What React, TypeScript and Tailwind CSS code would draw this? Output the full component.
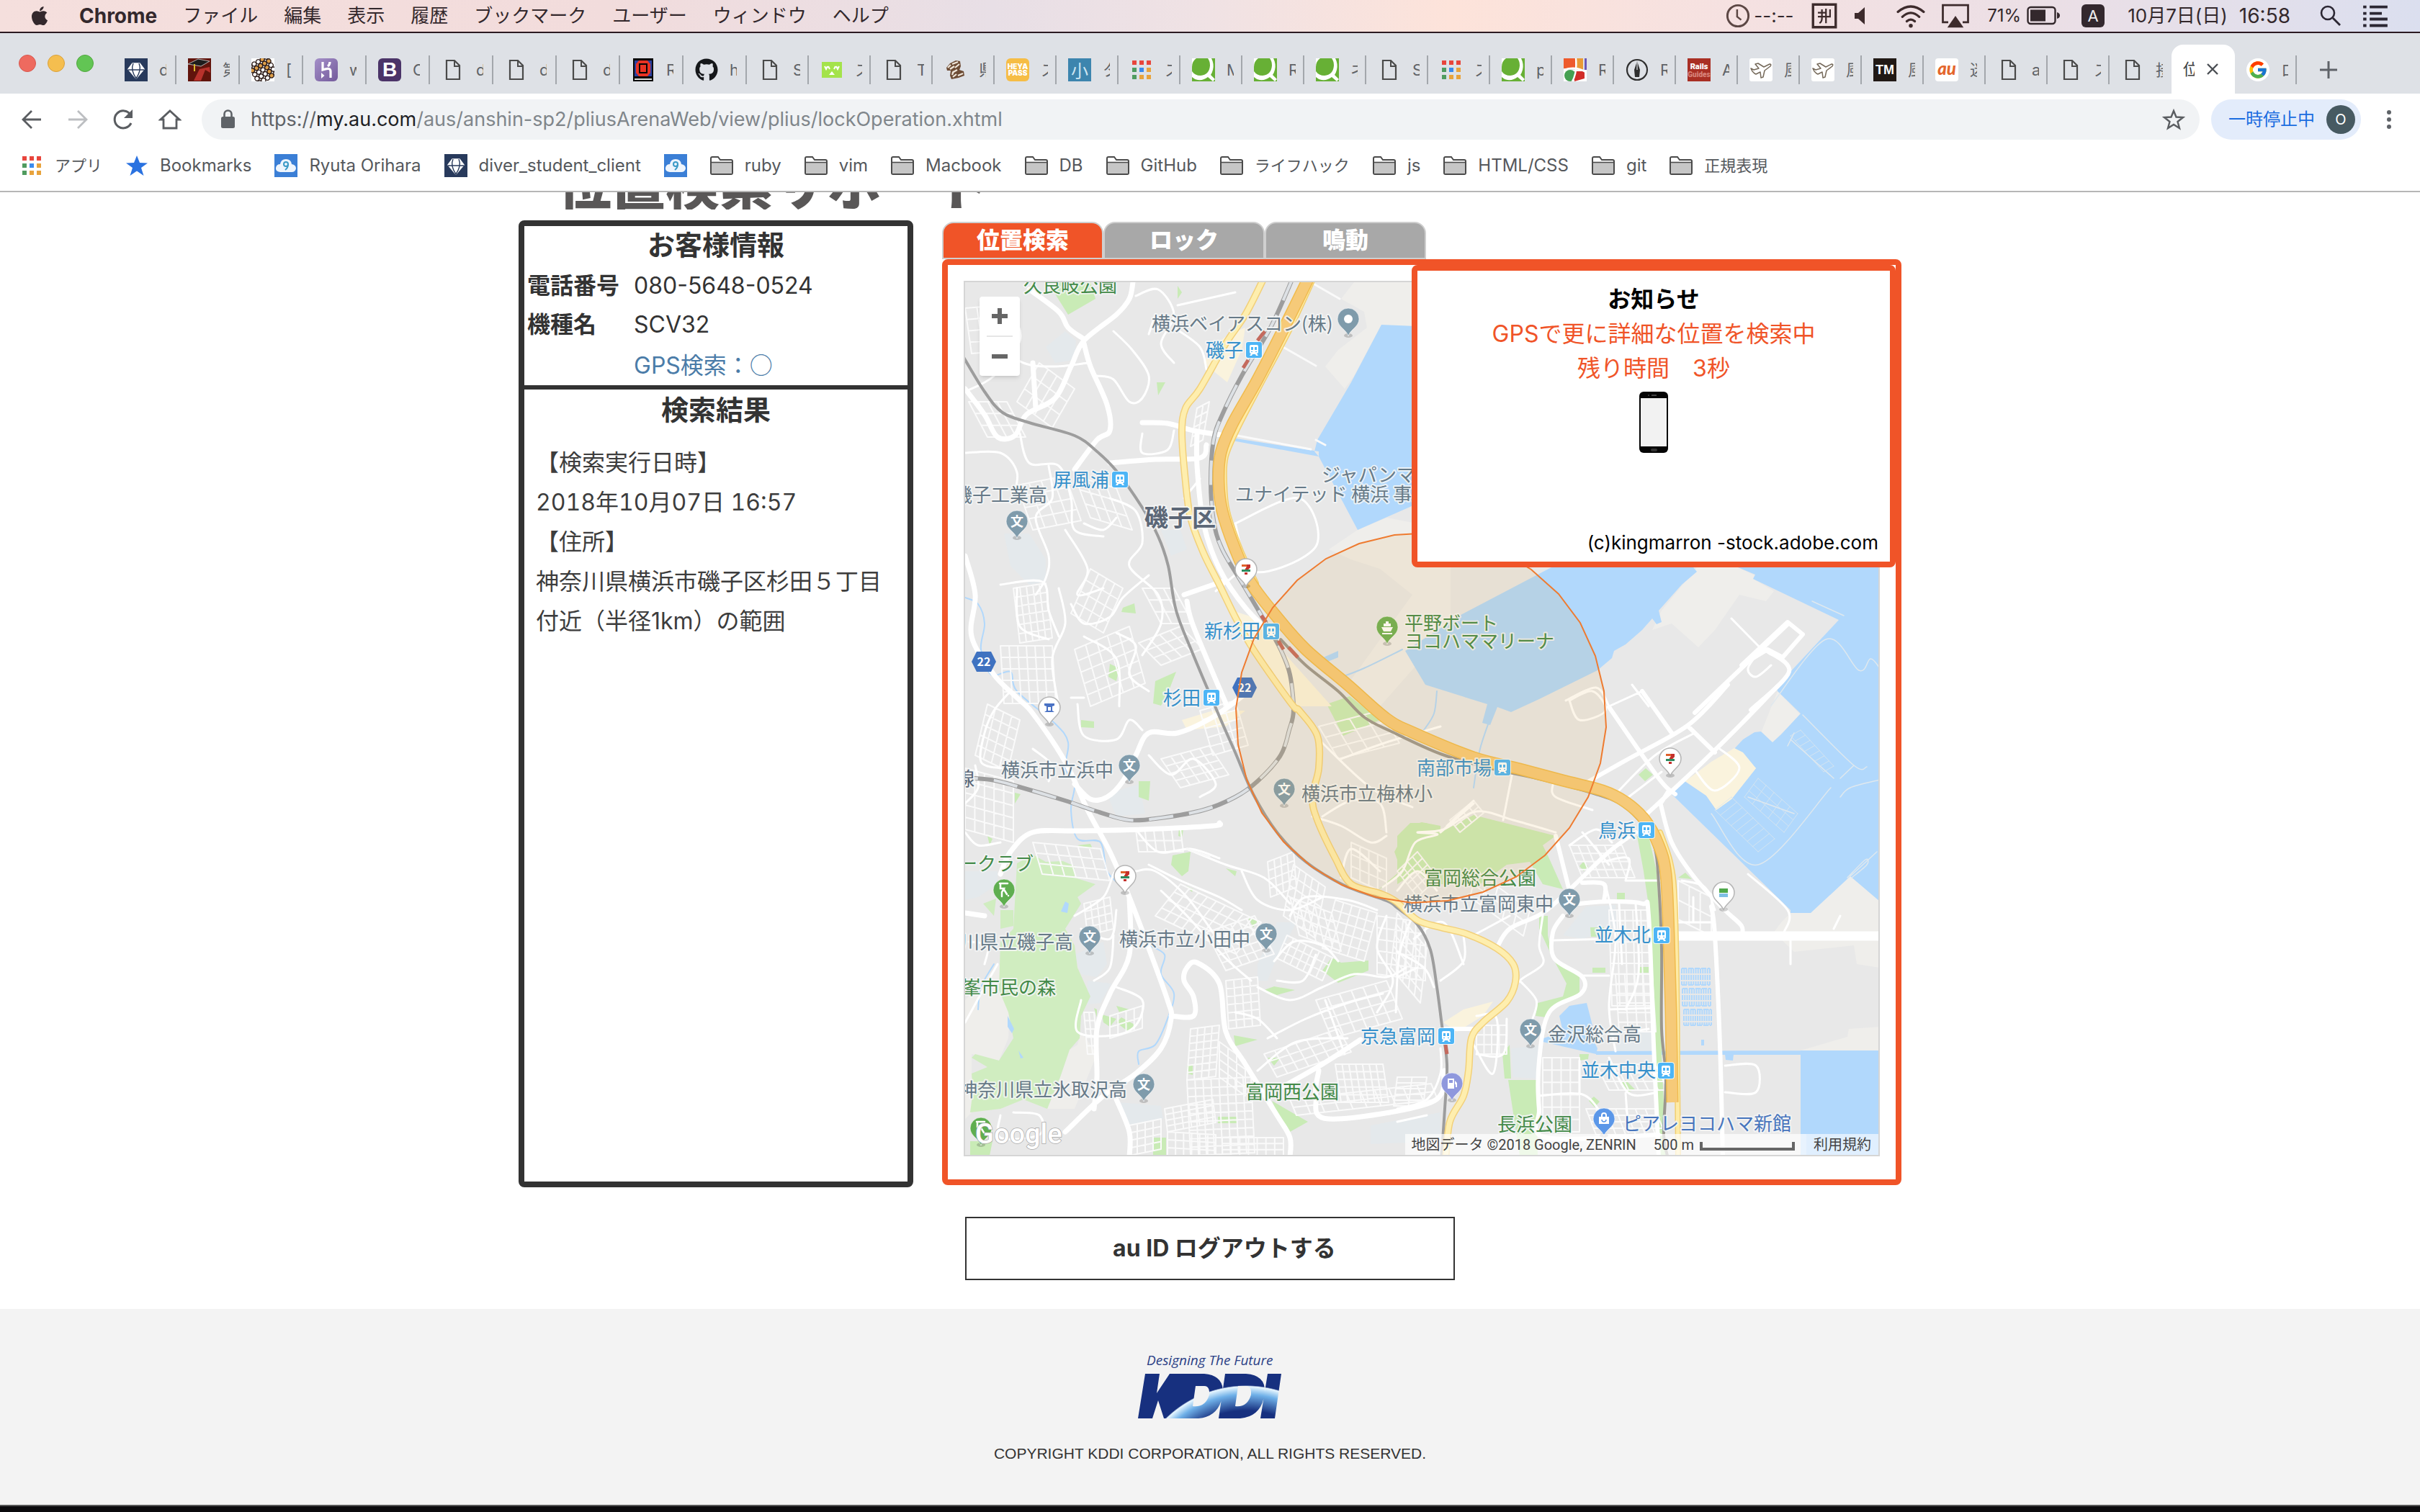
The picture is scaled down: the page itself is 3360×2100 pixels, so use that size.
import React from "react";
import { FaApple, FaGithub } from "react-icons/fa";
import { FcGoogle } from "react-icons/fc";

/* ---------- map geometry ---------- */

// The map is surveyed in four tiles; each has an origin and a scale.
const TILES: Record<string, [number, number, number, number]> = {
  A: [1300, 290, 0.4464, 0.4464],
  B: [1940, 290, 0.4592, 0.4464],
  C: [1300, 960, 0.4464, 0.4464],
  D: [1940, 960, 0.4592, 0.4464],
};

type Pt = [number, number];

function at(tile: string, u: number, v: number): Pt {
  const [x, y, sx, sy] = TILES[tile];
  return [Math.round(x + u * sx), Math.round(y + v * sy)];
}

// "A10,20 30,40 C5,6" -> points; a letter switches the tile.
function pts(s: string): Pt[] {
  let tile = "A";
  return s
    .trim()
    .split(/\s+/)
    .map((tok) => {
      if (/[A-D]/.test(tok[0])) {
        tile = tok[0];
        tok = tok.slice(1);
      }
      const [u, v] = tok.split(",").map(Number);
      return at(tile, u, v);
    });
}

const area = (s: string) =>
  s
    .split(";")
    .map((p) => "M" + pts(p).map((q) => q.join(" ")).join("L") + "Z")
    .join("");

function bend(p: Pt[]): string {
  let d = "M" + p[0].join(" ");
  for (let i = 0; i < p.length - 1; i++) {
    const a = p[i - 1] || p[i];
    const b = p[i];
    const c = p[i + 1];
    const e = p[i + 2] || c;
    d += `C${b[0] + (c[0] - a[0]) / 6} ${b[1] + (c[1] - a[1]) / 6} ${c[0] - (e[0] - b[0]) / 6} ${c[1] - (e[1] - b[1]) / 6} ${c[0]} ${c[1]}`;
  }
  return d;
}

const way = (s: string) =>
  s
    .split(";")
    .map((p) => bend(pts(p)))
    .join("");

// Blocks of side streets: origin, end of first side, end of second side, counts.
function blocks(list: string[]): string {
  return list
    .map((s) => {
      const parts = s.split(" ");
      const [o, a, b] = pts(parts.slice(0, 3).join(" "));
      const n = Number(parts[3]);
      const m = Number(parts[4]);
      let d = "";
      for (let i = 0; i <= n; i++) {
        const x = o[0] + ((a[0] - o[0]) * i) / n;
        const y = o[1] + ((a[1] - o[1]) * i) / n;
        d += `M${x} ${y}l${b[0] - o[0]} ${b[1] - o[1]}`;
      }
      for (let i = 0; i <= m; i++) {
        const x = o[0] + ((b[0] - o[0]) * i) / m;
        const y = o[1] + ((b[1] - o[1]) * i) / m;
        d += `M${x} ${y}l${a[0] - o[0]} ${a[1] - o[1]}`;
      }
      return d;
    })
    .join("");
}

const PALE_LAND = area(
  "A1300,228 1478,228 1478,380 1385,360 1300,520 1270,560 1210,490 1250,440 1340,370 1330,320 1260,280;A1220,1060 1310,1000 1400,960 1600,1000 1600,1300 1380,1548 1280,1480 1480,1200 1380,1120 1290,1090;B905,1116 1030,1116 1080,1140 1075,1152 1140,1190 1115,1220 1035,1200 960,1310 910,1365 830,1290 770,1310 800,1250;D1160,720 1190,690 1250,690 1350,590 1370,575 1458,655 1458,860 1390,850 1380,790 1200,810 1140,750;D1220,1118 1360,1075 1365,1050 1458,1045 1458,1118;C90,960 195,850 230,940 225,1080 195,1150 110,1130 110,1310 90,1330;C440,1100 450,1060 500,1130 430,1300 345,1300 385,1200 415,1115;D1100,130 1150,0 1220,75 1135,160"
);
const SCHOOL_LAND = area(
  "A210,1010 290,1010 340,1090 340,1160 290,1170 230,1110;A340,430 400,380 435,410 430,470 370,480;A700,1000 760,1000 780,1060 730,1080;C530,320 630,290 650,380 560,390;C430,820 520,780 530,850 500,890 450,880;C570,1280 700,1290 705,1330 600,1350;C1000,850 1060,720 1120,720 1050,850 1030,900 1000,900;D570,670 660,665 665,740 560,770 500,760;D345,1110 440,1100 420,1205 350,1200;C90,560 190,560 190,600 130,640 90,650;C1350,1350 1568,1310 1568,1400 1350,1410;D700,1060 780,1060 780,1120 650,1120;C470,900 545,910 510,970 470,975"
);
const WATER = area(
  "A1385,360 1290,540 1185,720 1175,755 1190,770 1310,1000 1478,925 1600,880 1600,370;B465,1116 195,1262 25,1375 85,1480 D273,40 258,98 282,106 302,50 345,66 B430,1525 605,1435 650,1398 655,1375 690,1355 740,1310 770,1275 785,1292 800,1285 790,1250 860,1170 905,1130 895,1116 850,1000;B1030,1000 1470,1000 D1470,655 1458,655 1370,575 1250,690 1190,690 1190,680 830,320 868,280 935,325 965,370 1010,335 1085,240 1020,180 1045,150 1080,128 1100,125 1135,160 1160,135 1220,70 1150,0 B1148,1490 1185,1445 1335,1280 1075,1152 1082,1138 1030,1116;D1220,1118 1470,1118 1470,1460 1220,1460;D490,1010 520,980 572,970 590,1040 585,1070 605,1110 600,1130 440,1090 430,1085 500,1060;D600,1120 1240,1118 1240,1132 600,1132;D990,1130 1018,1130 1015,1150 992,1148;D918,1085 928,1085 928,1102 918,1102;A1195,1400 1250,1375 1250,1395 1200,1415;C400,655 412,660 408,690 388,685;C222,1010 242,1050 235,1065 222,1045;C255,1118 272,1140 262,1142;A818,697 1190,755 1190,770 920,722"
);
const PARK = area(
  "A360,250 380,228 480,228 495,280 410,330;A750,240 765,260 750,280;A685,540 712,540 690,580;A580,1240 615,1228 620,1260 575,1255;A540,1415 570,1430 560,1470 535,1455;A680,1470 745,1440 720,1510 700,1545 675,1540;C630,280 665,280 660,340 630,330;C735,510 790,500 785,560 765,575 730,540;C1200,870 1230,828 1260,845 1345,838 1345,870 1250,908;C1020,930 1050,918 1115,930 1060,945;C515,1005 560,1020 540,1045 520,1030;C560,980 600,990 570,1000;C560,1030 575,1015 620,1040 600,1062;C925,1070 1000,1085 930,1105;C1030,1140 1070,1140 1050,1165;C1045,1275 1155,1340 1100,1372 1060,1310;C675,1390 715,1390 715,1446 675,1446;C875,1325 935,1325 935,1345 875,1345;C1215,40 1285,15 1380,90 1265,140;C450,90 490,95 490,115 450,112;C160,450 175,460 165,480;C245,315 262,320 245,350;C775,605 800,615 795,625;C900,550 935,560 930,575;C970,705 1000,715 985,735;C440,480 480,475 485,490;C755,425 768,430 765,455 752,450;C780,1165 798,1165 798,1195 780,1190;C105,1400 175,1400 165,1446 105,1446;C490,985 500,990 500,1015;D0,450 40,410 90,410 130,440 230,385 480,450 440,480 455,510 500,615 440,600 400,530 330,540 250,600 100,600 60,560 0,600;C1370,620 1450,570 1425,500 1470,420 1510,408 1568,420 1568,500 1490,520;D430,700 455,700 455,760 470,830 550,890 550,940 480,980 450,1015 418,1010 425,970 500,950 512,910 470,830 430,740;D725,450 760,450 785,560 800,820 800,1130 812,1446 785,1446 770,1100 765,700 745,560;D335,1210 420,1210 425,1446 370,1446;D318,1130 340,1100 345,1205 325,1205;D730,260 752,240 772,260 750,280;D550,545 562,532 578,545 564,560;D665,628 688,628 688,648 665,648;D590,860 630,860 630,875 590,875;D728,857 760,857 760,875 728,875;D583,735 625,735 622,765 585,765;D675,1215 690,1210 720,1240 700,1245;D580,1275 595,1262 612,1278 597,1295;D550,1130 580,1130 578,1145 552,1150;D850,580 870,565 890,585"
);
const FOREST = area(
  "C250,535 300,508 340,530 395,528 430,545 430,580 495,600 440,640 450,660 400,740 430,790 440,860 480,950 450,1010 445,1080 415,1115 385,1200 345,1300 270,1270 200,1300 105,1310 115,1240 110,1190 160,1170 110,1140 120,1128 195,1150 240,1080 225,1000 195,930 200,780 240,740;C200,680 240,680 240,730 200,740;C145,660 185,645 180,700"
);
const CREAM = area(
  "D870,280 950,220 1020,178 1045,190 1085,240 1010,335 965,370 935,325;A910,390 960,370 950,440 905,540 870,510 830,480 860,430;C765,90 860,60 960,60 900,110 780,120;A920,1250 1010,1280 1080,1380 1230,1548 1100,1548 960,1330;D140,1030 200,990 290,965 260,1010 180,1060"
);

const HIGHWAY = way(
  "A1155,220 1080,375 1000,530 920,670 885,760 878,850 890,940 930,1060 980,1165 1060,1270 1150,1370 1280,1480 C1400,85 D50,130 230,207 370,243 500,278 620,310 690,345 750,400 790,480 812,570 822,760 828,1000 832,1280"
);
const HIGHWAY_EDGE = way(
  "D795,440 825,530 838,640 845,900 848,1200 850,1460;A1172,220 1100,375 1018,530 938,680 900,770 895,850 905,940 945,1060 995,1165"
);
const COAST_ROAD = way(
  "A1015,225 960,330 900,420 820,560 775,620 765,700 775,850 790,960 830,1070 880,1170 930,1270 980,1360 1040,1450 1110,1548 C1130,60 1185,140 1190,240 1170,330 1185,400 1240,520 1290,600 1380,630 1430,655 D60,712 130,735 210,755 300,800 350,850 358,905 330,965 260,1030 225,1080 215,1180 200,1260 160,1340 145,1460"
);
const PRIVATE_RAIL = way(
  "A80,455 150,570 205,635 290,665 430,705 500,755 560,815 640,930 690,1020 722,1110 745,1250 800,1390 880,1580 C930,190 985,320 1060,440 1150,530 1270,605 1400,652 D0,675 60,725 100,805 120,920 135,1040 150,1160 143,1300 132,1460"
);
const SEASIDE_LINE = way(
  "A1070,1340 1150,1420 1250,1500 C1330,80 1420,128 D130,195 280,240 440,275 600,320 680,355 745,420 780,490 790,600 800,800 800,1050 812,1200 805,1380 820,1460"
);
const JR_LINE = way(
  "A1108,215 1040,370 950,520 890,640 863,720 853,850 862,970 890,1060 960,1180 1020,1280 1070,1370 1100,1450 1110,1560 C1098,120 1070,200 1000,280 930,330 830,370 700,395 600,400 500,375 400,340 250,295 170,275 80,268"
);
const PLATFORMS = way("A1022,380 1000,410;A970,470 955,495;A1010,1265 1025,1285;A1065,1345 1080,1370;A1095,1365 1125,1395;D145,1100 150,1130");

const MAJOR = way(
  "A90,560 150,640 190,710 245,705 280,640 370,590 420,490 460,410 560,330 600,280 612,228;A640,665 720,668 800,690 900,705;A540,790 680,780 820,775 840,735;A430,810 500,720 540,690 530,610 480,490 460,420;A290,250 380,320 410,370 460,405;A300,480 310,620;A812,700 810,800 830,980 880,1120 960,1240 1060,1340;A770,1200 900,1155;A780,1220 800,1300 900,1540;A90,1080 120,1200 110,1330 180,1450 250,1520 C300,70 400,220 470,370 540,500 600,640 660,800 720,960 730,1020 700,1110 620,1190 520,1260 400,1370;C90,690 150,700;C200,570 230,500 300,440 440,435 640,430 860,420 880,410;C430,290 480,335 530,330 580,280 620,200 660,130 750,130 860,80 960,10;C600,640 600,820 540,940 500,1050 500,1200 490,1300;C730,1010 800,1010 800,950 770,900 780,860 810,845 880,910 900,1060 960,1160 1060,1320 1100,1390 1100,1450;C1080,1230 1200,1160 1320,1085;C1190,1180 1180,1260 1220,1330 1540,1280 1580,1180;C560,1270 600,1370 600,1450"
);
const MAJOR_EAST = way(
  "D755,380 900,245 1040,100 1150,-15;D565,290 700,210 880,105 1000,-20;D795,345 830,470 900,580 990,680 1040,730 1042,765;D800,345 820,310;D950,670 960,760 975,1100 985,1450;D300,800 340,740 440,690 530,610 640,500 720,440;D550,660 640,655 740,660 760,700 775,1100 790,1450;D500,700 470,750 475,830 560,890 555,940 460,1000 430,1150 430,1300 450,1390 790,1380;D560,595 625,600 625,655;D140,1050 230,1050;D640,50 790,270 840,320;D740,0 830,130;D880,110 960,190;D480,450 520,620"
);
const PIER_ROAD = area("B1040,1420 1180,1285 1225,1325 1165,1395 1120,1372") + way("B1182,1290 900,1568;B1120,1375 1185,1440 1070,1560");
const HARBOUR_ROAD = way("D845,762 1100,762 1300,762 1470,762");

const MINOR = way(
  "A90,570 180,520 260,410 230,330 150,300;A210,300 200,420 270,480 370,490 470,480;A620,270 690,250 740,330 700,420 740,480;A550,380 610,440 660,520 640,590 600,600 550,530 500,520;A680,330 660,390;A260,700 290,790 380,800 420,900 430,1000 520,1020;A90,760 200,760 250,820 240,900;A350,800 360,900 310,960 350,1080 340,1150 310,1200;A200,1170 330,1160 350,1250 380,1330;A540,900 620,940 640,1040 600,1110 690,1200 700,1290 640,1390;A400,1000 470,1120 440,1200 520,1180;A420,1230 460,1290 540,1270 580,1210 660,1140;A380,1180 400,1290 360,1400 380,1548;A250,1180 260,1300 350,1340;A560,960 520,1000 460,980;A640,700 640,760 720,750 740,690;A560,1320 620,1360 600,1450 660,1500;A820,840 770,900;A940,1130 870,1190;A460,1330 560,1400 570,1548;A740,370 820,430 840,500;A750,300 930,260;A930,980 1130,900 1180,1050 990,1130 930,980;C230,0 180,60 150,130 140,220 200,240;C90,350 130,300 120,230;C300,180 360,230 350,280;C90,440 130,480 200,470;C440,40 460,140 560,150 600,90 640,120;C420,20 460,20;C660,200 730,260 800,210 870,290 820,330;C620,430 690,500 790,490 880,520;C780,490 900,540 1020,580 1100,660;C660,540 760,590 880,640 950,680;C700,620 780,700 900,830 980,900;C620,560 680,560 780,640 880,780;C950,560 1000,650 1100,680 1200,640;C1100,700 1150,640 1280,650 1370,680;C430,700 520,640 560,560 600,640;C450,740 540,770 560,680;C550,760 540,860 490,900;C450,960 440,1060 550,1070 620,1040 640,960 560,920;C1050,840 1110,780 1200,790 1250,840;C1060,900 1140,900 1180,820;C1000,920 1100,960 1200,920 1300,880 1400,890 1460,860;C1400,700 1370,800 1420,900 1370,1000;C1480,700 1440,820 1430,1000;C1030,1080 1150,1020 1280,970 1390,940;C1000,1180 1120,1090 1280,1080;C1210,960 1270,1130;C930,1000 1000,1020 1060,1080;C240,1310 320,1320 320,1380 200,1390 200,1320;C90,1030 140,940 190,850;C150,850 160,790 100,780;C1170,390 1260,420 1350,470 1400,450;C1190,150 1350,300 1480,360;C1260,210 1400,160 1568,110;C1200,390 1290,340 1380,350 1400,440;C1260,580 1290,490 1380,560;C1390,610 1450,560 1490,470 1560,445 D60,440 140,430 240,375 350,400 480,440;D350,240 320,400;D470,290 480,330 590,370;D520,30 590,0 630,60 550,90 520,30;D900,245 960,310 1035,240 970,175;D230,340 150,420;D130,440 230,350;D0,620 60,560 120,620;D50,770 140,720 200,850;D200,760 200,840 130,900;D230,760 340,700;D440,700 430,790 440,850 370,900 330,960;D370,900 420,960 410,1020;D230,1100 290,1190 300,1020 240,1010;D330,1020 320,1130 240,1130;D630,600 660,770 640,980 660,1120;D690,590 820,590;D470,775 640,770;D560,885 640,885;D640,990 770,985;D670,660 680,850;D720,660 730,880 690,990;D860,590 930,610 960,680;D850,720 950,720;D895,640 895,720;D990,1165 1085,1165 1085,1248 990,1248;D430,1260 560,1255 620,1320;D550,1150 550,1250;D640,1140 700,1250 780,1250;D690,1250 700,1370;D700,1060 760,1050;D0,810 80,860 110,920;D0,890 60,860;D0,1300 90,1270 130,1190 130,1110;D0,1340 90,1320;D520,480 600,430 650,470;D620,530 700,520 690,590;D560,440 640,540;B1010,1275 1110,1380;B1100,1370 1060,1430 1085,1455 1130,1420;B710,1480 760,1548;B510,1530 600,1490 640,1548;B640,1548 740,1500;D700,330 800,250;D660,320 780,200 900,130;D1060,570 1180,680 1170,750;D1190,770 1190,850;D1340,700 1320,740"
);
const LANES = blocks([
  "A90,310 200,300 110,450 3 4",
  "A320,480 430,560 250,600 4 3",
  "A100,600 220,600 160,710 4 3",
  "A240,1180 340,1165 260,1350 5 6",
  "A200,1360 360,1360 210,1540 6 5",
  "A430,1370 600,1300 480,1548 5 5",
  "A480,1120 580,1180 420,1260 4 4",
  "A630,1350 760,1300 700,1420 4 3",
  "A810,620 850,600 790,740 2 4",
  "A250,860 400,830 300,1000 4 4",
  "A430,830 560,870 480,960 4 3",
  "A640,1180 740,1180 700,1290 3 3",
  "C90,240 240,280 90,430 5 5",
  "C300,470 510,490 330,570 6 3",
  "C620,430 760,430 630,500 5 2",
  "C700,210 850,170 760,300 5 4",
  "C160,40 260,90 120,200 4 5",
  "C820,60 930,30 860,200 3 5",
  "C1030,530 1110,500 1040,640 4 4",
  "C1110,540 1210,610 1080,700 5 5",
  "C760,600 1010,720 680,700 9 4",
  "C840,750 990,700 900,870 6 5",
  "C1060,830 1200,900 1090,760 7 3",
  "C900,900 1000,890 910,1050 4 6",
  "C790,1050 880,1040 780,1210 4 7",
  "C780,1210 980,1200 790,1446 8 9",
  "C880,1090 960,1150 880,1200 3 4",
  "C600,1350 700,1330 600,1446 4 4",
  "C710,1300 860,1270 720,1370 6 4",
  "C1240,1160 1390,1160 1260,1280 7 5",
  "C1100,1270 1540,1220 1120,1320 10 2",
  "C1020,1130 1250,1050 1060,1200 7 3",
  "C1180,960 1400,900 1230,1080 6 4",
  "C1240,650 1370,690 1200,800 5 5",
  "C1100,640 1230,690 1130,760 5 4",
  "C1370,700 1520,720 1370,880 5 5",
  "C460,660 540,640 470,760 4 4",
  "C460,1000 490,1000 470,1130 2 5",
  "C540,1010 640,980 540,1080 4 2",
  "C1290,470 1400,520 1290,580 4 3",
  "C720,1370 870,1380 720,1446 6 3",
  "C890,1390 1080,1390 890,1446 7 3",
  "D0,690 90,800 -20,860 5 5",
  "D240,1040 330,1040 240,1130 4 3",
  "D640,680 760,680 650,980 5 9",
  "D660,880 770,880 670,1060 4 6",
  "D520,480 680,480 560,580 6 4",
  "D440,1140 550,1140 440,1370 4 6",
  "D570,1300 780,1300 600,1380 7 4",
  "D600,1160 780,1160 640,1240 6 3",
  "D850,590 950,640 850,710 3 2",
  "D0,560 60,500 60,640 4 4",
  "D160,400 230,340 190,440 4 2",
  "D0,1200 90,1200 -10,1290 2 5",
  "D240,560 400,680 220,640 5 2",
  "C1190,110 1380,60 1250,210 4 3",
]);
const PIERS = way(
  "D1190,150 1320,270;D1200,130 1180,170;D1225,75 1380,230 1420,235;D1380,230 1340,270;D950,380 1090,540 1310,300;D1460,275 1370,300 1340,330;D1370,575 1450,500;D1360,580 1415,525 1420,540 1375,580;B1130,1545 1295,1340 1395,1435 1430,1400 1458,1430;B1255,1220 1350,1265;D1060,330 1200,380"
);
const PIER_ROWS = blocks([
  "D1090,270 1210,380 1050,330 5 3",
  "D960,370 1090,500 1010,330 8 1",
  "D1190,140 1290,250 1220,120 7 1",
]);
const SOLAR = blocks([
  "D860,862 945,862 860,915 12 1",
  "D862,925 947,925 862,980 12 1",
  "D866,990 950,990 866,1040 12 1",
]);
const STREAM = way(
  "A90,1210 130,1230 150,1290 140,1370 170,1450 230,1440 250,1500 C370,100 410,160 400,240 430,290 420,370 440,460 510,470 530,560 580,610;C660,790 710,820 700,880 740,940 720,1020 680,1100 630,1120 630,1160;C180,850 140,920 130,990;A1250,1460 1330,1430 1450,1370;D120,0 110,70 80,120;D290,60 250,180 230,300"
);
const SIDE_TRACKS = way("A1070,425 1180,488;A1165,228 1255,280;A900,700 1165,748;A1210,735 1180,720;C780,490 850,515");

const LABEL_COLOURS = {
  green: "#438a48",
  slate: "#677a88",
  blue: "#3690cb",
  dark: "#5c6777",
  shop: "#4775bd",
};

type Label = [string, number, number, string, keyof typeof LABEL_COLOURS, number?];
const LABELS: Label[] = [
  ["A", 272, 237, "久良岐公園", "green"],
  ["A", 670, 357, "横浜ベイアスコン(株)", "slate"],
  ["A", 838, 438, "磯子", "blue"],
  ["A", 362, 843, "屏風浦", "blue"],
  ["A", 53, 890, "磯子工業高", "slate"],
  ["A", 648, 962, "磯子区", "dark", 33],
  ["A", 1198, 827, "ジャパンマリン", "slate"],
  ["A", 930, 887, "ユナイテッド 横浜 事業所", "slate"],
  ["A", 833, 1313, "新杉田", "blue"],
  ["A", 1455, 1287, "平野ボート", "green"],
  ["A", 1455, 1345, "ヨコハママリーナ", "green"],
  ["A", 706, 1520, "杉田", "blue"],
  ["C", 202, 245, "横浜市立浜中", "slate"],
  ["C", 60, 270, "線", "dark"],
  ["C", 1135, 318, "横浜市立梅林小", "slate"],
  ["C", 70, 535, "ークラブ", "green"],
  ["C", 77, 780, "川県立磯子高", "slate"],
  ["C", 568, 770, "横浜市立小田中", "slate"],
  ["C", 80, 920, "峯市民の森", "green"],
  ["C", 70, 1238, "神奈川県立氷取沢高", "slate"],
  ["C", 962, 1245, "富岡西公園", "green"],
  ["C", 1320, 1073, "京急富岡", "blue"],
  ["D", 58, 237, "南部市場", "blue"],
  ["D", 608, 432, "鳥浜", "blue"],
  ["D", 80, 580, "富岡総合公園", "green"],
  ["D", 20, 660, "横浜市立富岡東中", "slate"],
  ["D", 597, 758, "並木北", "blue"],
  ["D", 455, 1066, "金沢総合高", "slate"],
  ["D", 555, 1178, "並木中央", "blue"],
  ["D", 302, 1346, "長浜公園", "green"],
  ["D", 682, 1343, "ピアレヨコハマ新館", "shop"],
];

const STATIONS: [string, number, number][] = [
  ["A", 988, 438],
  ["A", 571, 843],
  ["A", 1042, 1314],
  ["A", 856, 1521],
  ["D", 318, 237],
  ["D", 753, 433],
  ["D", 799, 760],
  ["D", 148, 1073],
  ["D", 812, 1180],
];

type PinKind = "school" | "place" | "seven" | "family" | "atm" | "golf" | "gas" | "shop" | "boat" | "leaf";
const PINS: [string, number, number, PinKind][] = [
  ["A", 251, 972, "school"],
  ["C", 600, 230, "school"],
  ["C", 1081, 305, "school"],
  ["C", 477, 765, "school"],
  ["C", 1026, 755, "school"],
  ["C", 645, 1223, "school"],
  ["D", 520, 648, "school"],
  ["D", 403, 1053, "school"],
  ["A", 1281, 343, "place"],
  ["A", 963, 1122, "seven"],
  ["C", 588, 575, "seven"],
  ["D", 825, 210, "seven"],
  ["D", 986, 627, "family"],
  ["C", 351, 52, "atm"],
  ["C", 210, 619, "golf"],
  ["C", 138, 1360, "leaf"],
  ["D", 165, 1221, "gas"],
  ["D", 625, 1331, "shop"],
  ["A", 1402, 1302, "boat"],
];
const PIN_FILL: Record<PinKind, string> = {
  school: "#7f9bab",
  place: "#7f9bab",
  seven: "#fff",
  family: "#fff",
  atm: "#fff",
  golf: "#5fae50",
  leaf: "#5fae50",
  gas: "#8f98dd",
  shop: "#5b97e8",
  boat: "#6cb054",
};

function Pin({ x, y, kind }: { x: number; y: number; kind: PinKind }) {
  const pale = PIN_FILL[kind] === "#fff";
  return (
    <g transform={`translate(${x} ${y})`}>
      <ellipse cx="0" cy="23" rx="6" ry="3" fill="#000" opacity=".18" />
      <path
        d="M0 24C-2 15-15 11-15 0A15 15 0 0 1 15 0C15 11 2 15 0 24Z"
        fill={PIN_FILL[kind]}
        stroke={pale ? "#b5b5b5" : "#fff"}
        strokeWidth={pale ? 1.5 : 0.6}
      />
      {kind === "school" && (
        <text x="0" y="7" textAnchor="middle" fontSize="18" fontWeight="700" fill="#fff">
          文
        </text>
      )}
      {kind === "place" && <circle r="6" fill="#fff" />}
      {kind === "seven" && (
        <g>
          <path d="M-6-7H6V-3L2 1H-2L1-4H-6Z" fill="#e0612c" />
          <path d="M1-7H6V-3L2 1H-2L1-4Z" fill="#c4302b" />
          <path d="M-6 0H6V3H-6Z" fill="#2e8a5e" />
          <path d="M-2 4H2V7H-2Z" fill="#c4302b" />
        </g>
      )}
      {kind === "family" && (
        <g>
          <path d="M-6-6H6V0H-6Z" fill="#4fa84a" />
          <path d="M-6 1H6V6H-6Z" fill="#7fbfe4" />
        </g>
      )}
      {kind === "atm" && <path d="M-7-6H7V-3L4-2V4L7 6H-7L-4 4V-2L-7-3Z" fill="#4a72c4" />}
      {kind === "atm" && <path d="M-2-1H2V4H-2Z" fill="#fff" />}
      {(kind === "golf" || kind === "leaf") && (
        <path d="M-6-9H5M-5-9V-2L0-2L-3 3V9M-1-2L4 6M6 8V8" stroke="#fff" strokeWidth="2.5" fill="none" strokeLinecap="round" />
      )}
      {kind === "gas" && <path d="M-6 7V-7H3V7ZM4-4L7-1V5H5V1H4Z M-4-5V-1H1V-5Z" fill="#fff" fillRule="evenodd" />}
      {kind === "shop" && (
        <g>
          <path d="M-7-3H7V7H-7Z" fill="#fff" />
          <path d="M-3-3V-5A3 3 0 0 1 3-5V-3" fill="none" stroke="#fff" strokeWidth="2" />
          <path d="M-3 1A3 3 0 0 0 3 1" fill="none" stroke="#5b97e8" strokeWidth="1.5" />
        </g>
      )}
      {kind === "boat" && (
        <g fill="#fff">
          <path d="M-8 0H8L5 6H-5Z" />
          <path d="M-5-5H5V-1H-5ZM-2-8H2V-5H-2Z" />
          <path d="M-7 8H7V10H-7Z" />
        </g>
      )}
    </g>
  );
}

function Station({ x, y }: { x: number; y: number }) {
  return (
    <g transform={`translate(${x} ${y})`}>
      <rect x="-12" y="-12" width="24" height="24" rx="4" fill="#fff" opacity=".8" />
      <rect x="-11" y="-11" width="22" height="22" rx="3" fill="#4db5f6" />
      <path d="M-4-7H4Q6-7 6-5V3Q6 5 4 5L6 8H3L2 6H-2L-3 8H-6L-4 5Q-6 5-6 3V-5Q-6-7-4-7Z" fill="#fff" />
      <path d="M-4-4H-1V0H-4ZM1-4H4V0H1ZM-4 2H-2V3H-4ZM2 2H4V3H2Z" fill="#4db5f6" />
    </g>
  );
}

function RouteSign({ x, y }: { x: number; y: number }) {
  return (
    <g transform={`translate(${x} ${y})`}>
      <path d="M-10-14H10L17 0L10 14H-10L-17 0Z" fill="#3f72c0" />
      <text x="0" y="6" textAnchor="middle" fontSize="16" fontWeight="700" fill="#fff">
        22
      </text>
    </g>
  );
}

function CityMap() {
  const circle: Pt[] = Array.from({ length: 32 }, (_, i) => {
    const t = (Math.PI * 2 * i) / 32 + 0.05;
    return [Math.round(1973 + 257 * Math.cos(t)), Math.round(997 + 257 * Math.sin(t))];
  });
  return (
    <svg
      viewBox="1340 392 1268 1212"
      className="block h-auto w-full font-['Noto_Sans_CJK_JP',sans-serif]"
      role="img"
      aria-label="地図"
    >
      <rect x="1340" y="392" width="1268" height="1212" fill="#e8e8e8" />
      <path d={PALE_LAND} fill="#efeeeb" />
      <path d={SCHOOL_LAND} fill="#e4e9ec" />
      <path d={FOREST} fill="#d0edc0" />
      <path d={WATER} fill="#b1d8fc" />
      <path d={PARK} fill="#c9ebb6" />
      <path d={CREAM} fill="#faf3dd" />
      <g fill="none" strokeLinecap="round" strokeLinejoin="round">
        <path d={STREAM} stroke="#b1d8fc" strokeWidth="2" />
        <path d={PIERS} stroke="#dfe8ee" strokeWidth="1.5" />
        <path d={PIER_ROWS} stroke="#dbe6ee" strokeWidth="1" opacity=".8" />
        <path d={SOLAR} stroke="#b1d8fc" strokeWidth="2" strokeDasharray="7 2" strokeLinecap="butt" />
        <path d={LANES} stroke="#fafafa" strokeWidth="2" />
        <path d={MINOR} stroke="#fff" strokeWidth="3" />
        <path d={SIDE_TRACKS} stroke="#fafafa" strokeWidth="3" />
        <path d={MAJOR} stroke="#fff" strokeWidth="7" />
        <path d={MAJOR_EAST} stroke="#fff" strokeWidth="6" />
        <path d={PIER_ROAD} stroke="#fff" strokeWidth="6" />
        <path d={HARBOUR_ROAD} stroke="#fff" strokeWidth="13" strokeLinecap="butt" />
        <path d={JR_LINE} stroke="#9d9d9d" strokeWidth="6" strokeLinecap="butt" />
        <path d={JR_LINE} stroke="#dde1e5" strokeWidth="4" strokeLinecap="butt" strokeDasharray="34 22" />
        <path d={PRIVATE_RAIL} stroke="#9d9d9d" strokeWidth="4" />
        <path d={COAST_ROAD} stroke="#f2d07a" strokeWidth="10" />
        <path d={COAST_ROAD} stroke="#feeeae" strokeWidth="7" />
        <path d={SEASIDE_LINE} stroke="#9b978f" strokeWidth="4" />
        <path d={HIGHWAY_EDGE} stroke="#f2cf70" strokeWidth="8" />
        <path d={HIGHWAY_EDGE} stroke="#feeba6" strokeWidth="5" />
        <path d={HIGHWAY} stroke="#f0bb4e" strokeWidth="17" strokeLinecap="butt" />
        <path d={HIGHWAY} stroke="#f6ca79" strokeWidth="14" strokeLinecap="butt" />
        <path d={PLATFORMS} stroke="#c46a5e" strokeWidth="5" strokeLinecap="butt" />
      </g>
      {LABELS.map(([t, u, v, text, colour, size]) => {
        const [x, y] = at(t, u, v);
        const px = size ?? 26;
        return (
          <text
            key={text}
            x={x}
            y={y + Math.round(px * 0.37)}
            fontSize={px}
            fontWeight={size ? 700 : 400}
            fill={LABEL_COLOURS[colour]}
            stroke="#f4f6f6"
            strokeOpacity=".85"
            strokeWidth="4"
            strokeLinejoin="round"
            paintOrder="stroke"
          >
            {text}
          </text>
        );
      })}
      {STATIONS.map(([t, u, v]) => {
        const [x, y] = at(t, u, v);
        return <Station key={`${x}-${y}`} x={x} y={y} />;
      })}
      <RouteSign x={1366} y={919} />
      <RouteSign x={1728} y={955} />
      {PINS.map(([t, u, v, kind]) => {
        const [x, y] = at(t, u, v);
        return <Pin key={`${x}-${y}`} x={x} y={y} kind={kind} />;
      })}
      <polygon points={circle.map((p) => p.join(",")).join(" ")} fill="#e8a234" fillOpacity=".11" stroke="#ee7b30" strokeWidth="2" />
      <text x="1354" y="1588" fontSize="38" fontWeight="500" fill="#fff" stroke="#a8a8a8" strokeWidth="1.5" paintOrder="stroke" fontFamily="Roboto, sans-serif">
        Google
      </text>
    </svg>
  );
}

/* ---------- favicons ---------- */

function Svg({ children, box = 32, className = "size-8" }: { children: React.ReactNode; box?: number; className?: string }) {
  return (
    <svg viewBox={`0 0 ${box} ${box}`} className={`${className} block flex-none`} aria-hidden="true">
      {children}
    </svg>
  );
}

const Globe = () => (
  <Svg>
    <rect width="32" height="32" fill="#283a5c" />
    <path d="M11 7H21L27 15L16 28L5 15Z" fill="#fff" stroke="#fff" strokeWidth="1.5" strokeLinejoin="round" />
    <path d="M5 16H27M12 7Q8 16 16 28Q24 16 20 7" stroke="#283a5c" strokeWidth="1.4" fill="none" />
  </Svg>
);
const Doc = () => (
  <Svg>
    <path d="M7 3H18L25 10V29H7Z" fill="none" stroke="#4a4a4a" strokeWidth="2.2" />
    <path d="M18 3V11H25" fill="none" stroke="#4a4a4a" strokeWidth="2" />
  </Svg>
);
const Cap = () => (
  <Svg>
    <rect width="32" height="32" fill="#61140c" />
    <path d="M8 31L16 15L30 12L31 20L24 16L18 31Z" fill="#b8322c" />
    <path d="M0 8L14 1L30 4L18 11Z" fill="#1d1d1d" stroke="#d8d8d8" strokeWidth=".8" />
    <path d="M9 8V18" stroke="#d9b92e" strokeWidth="2" />
  </Svg>
);
const Checker = () => (
  <Svg>
    <rect width="32" height="32" fill="#fff" />
    <g transform="rotate(-30 16 16)">
      {Array.from({ length: 25 }, (_, i) => (
        <circle key={i} cx={3 + (i % 5) * 6.5} cy={3 + Math.floor(i / 5) * 6.5} r="3" fill={i % 5 === 3 || Math.floor(i / 5) === 1 ? "#dfa04a" : "#fff"} stroke="#2b1b18" strokeWidth="1.3" />
      ))}
    </g>
  </Svg>
);
const HerokuTab = () => (
  <Svg>
    <defs>
      <linearGradient id="heroku-bg" x1="0" y1="0" x2="1" y2="1">
        <stop offset="0" stopColor="#a48fc8" />
        <stop offset="1" stopColor="#735a9b" />
      </linearGradient>
    </defs>
    <rect width="32" height="32" rx="6" fill="url(#heroku-bg)" />
    <path d="M11 5V16Q22 12 22 18V27M21 5Q21 9 18 11" fill="none" stroke="#fff" strokeWidth="3.200" />
    <path d="M9 20L13.500 24L9 28Z" fill="#fff" />
  </Svg>
);
const BootTab = () => (
  <span className="flex size-8 flex-none items-center justify-center rounded-md bg-[#4b3468] font-['Liberation_Sans',sans-serif] text-[28px] font-bold leading-none text-white">B</span>
);
const Ring = () => (
  <Svg>
    <rect x="2" width="28" height="32" fill="#050505" />
    <rect x="4" y="3" width="24" height="22" fill="#2b3fa0" />
    <path d="M10 3H22L26 8V20L22 25H10L6 20V8Z" fill="#ea3323" />
    <rect x="11" y="8" width="10" height="12" fill="none" stroke="#050505" strokeWidth="2" />
    <rect x="4" y="28" width="24" height="2" fill="#ddd" />
  </Svg>
);
const GithubTab = () => <FaGithub className="size-8 flex-none text-[#15171a]" aria-hidden="true" />;
const Face = () => (
  <Svg>
    <rect x="2" y="5" width="28" height="22" fill="#a4e34b" />
    <path d="M6 11L8 15L10 11M11 11L13 15M19 15L21 11M22 11L24 15L26 11" stroke="#fff" strokeWidth="2" fill="none" />
    <path d="M16 18L20 23H12Z" fill="#fff" />
  </Svg>
);
const Wood = () => (
  <Svg>
    <path d="M3 13L8 7L16 3L22 4L23 11L21 16L27 18L28 24L20 27L10 29L8 24L9 17L4 17Z" fill="#6d4c35" />
    <path d="M5 13L9 9M11 8L19 5M8 15L14 11M15 13L21 8M11 20L18 16M12 26L17 22M19 24L26 21M11 23L13 18" stroke="#efe6da" strokeWidth="2.200" />
  </Svg>
);
const Heya = () => (
  <span className="flex size-8 flex-none flex-col items-center justify-center rounded-md bg-[#f6bd45] font-['Inter',sans-serif] text-[10px] font-black leading-[9px] text-white">
    <span>HEYA</span>
    <span>PASS</span>
  </span>
);
const Small = () => (
  <span className="flex size-8 flex-none items-center justify-center bg-[#3d85ae] font-['Noto_Sans_CJK_JP',sans-serif] text-2xl leading-none text-[#cfe6f2]">小</span>
);
const AppsGrid = () => (
  <Svg>
    {["#e8453c", "#e8453c", "#e8453c", "#4f9b5f", "#3b8bee", "#e8a33c", "#4f9b5f", "#e8a33c", "#e8a33c"].map((c, i) => (
      <rect key={i} x={3 + (i % 3) * 10} y={3 + Math.floor(i / 3) * 10} width="6" height="6" fill={c} />
    ))}
  </Svg>
);
const Qiita = () => (
  <Svg>
    <rect width="32" height="32" fill="#67b035" />
    <path d="M0 0H6Q0 4 0 12Z" fill="#fff" />
    <path d="M22 0H27Q31 8 29 16Q28 20 26 23L32 29L29 32L22 26Q16 31 8 30Q3 29 0 26V18Q4 24 12 24Q24 23 25 10Q25 4 22 0Z" fill="#fff" />
  </Svg>
);
const Mosaic = () => (
  <Svg>
    <path d="M0 0H16V14H0Z" fill="#ee5a2c" />
    <path d="M18 0H27V16H18Z" fill="#e99a36" />
    <path d="M29 0H32V18H29Z" fill="#6a58b8" />
    <rect y="16" width="32" height="16" fill="#fff" />
    <circle cx="9" cy="24" r="8" fill="#45a052" />
    <path d="M15 18H29V28L15 32Z" fill="#d22d28" />
    <path d="M17 0Q19 20 12 32M0 16Q18 10 32 20" stroke="#fff" strokeWidth="2.4" fill="none" />
  </Svg>
);
const PenNib = () => (
  <Svg>
    <circle cx="16" cy="16" r="14" fill="none" stroke="#2f2f2f" strokeWidth="2.2" />
    <path d="M16 4L20 16L19 26H13L12 16Z" fill="#2f2f2f" />
    <path d="M16 5V16" stroke="#dee1e6" strokeWidth="1.2" />
  </Svg>
);
const Rails = () => (
  <span className="flex size-8 flex-none flex-col justify-end bg-[#a92f24] pb-1 font-['Roboto',sans-serif] text-[11px] font-black leading-[11px] text-white">
    <span>Rails</span>
    <span className="text-[10px] text-[#d8837a]">Guides</span>
  </span>
);
const Plane = () => (
  <Svg>
    <rect width="32" height="32" rx="3" fill="#fff" />
    <path d="M2 14L6 16L13 14L8 8L12 7L20 12L28 8Q31 8 29 11L21 17L19 26L16 27L15 19L9 22L7 21L4 18Z" fill="none" stroke="#75695a" strokeWidth="1.5" strokeLinejoin="round" />
  </Svg>
);
const TM = () => (
  <span className="flex size-8 flex-none items-center justify-center bg-[#211915] font-['Liberation_Sans',sans-serif] text-[18px] font-bold text-white">TM</span>
);
const Au = () => (
  <span className="flex size-8 flex-none items-center justify-center rounded bg-white pb-1 font-['Lato',sans-serif] text-2xl font-black italic leading-none text-[#e4662c]">au</span>
);
const Gmark = () => (
  <span className="flex size-8 flex-none items-center justify-center rounded-full bg-white">
    <FcGoogle className="size-7" aria-hidden="true" />
  </span>
);

const WIDE_TABS: [() => React.ReactElement, string][] = [
  [Globe, "d"],
  [Cap, "第"],
  [Checker, "["],
  [HerokuTab, "w"],
  [BootTab, "C"],
  [Doc, "d"],
  [Doc, "d"],
  [Doc, "d"],
  [Ring, "R"],
  [GithubTab, "h"],
];
const TABS: [() => React.ReactElement, string][] = [
  [Doc, "S"],
  [Face, "ス"],
  [Doc, "T"],
  [Wood, "県"],
  [Heya, "ス"],
  [Small, "タ"],
  [AppsGrid, "ス"],
  [Qiita, "M"],
  [Qiita, "R"],
  [Qiita, "ネ"],
  [Doc, "S"],
  [AppsGrid, "ス"],
  [Qiita, "p"],
  [Mosaic, "R"],
  [PenNib, "R"],
  [Rails, "A"],
  [Plane, "風"],
  [Plane, "風"],
  [TM, "風"],
  [Au, "迷"],
  [Doc, "a"],
  [Doc, "ス"],
  [Doc, "接"],
];

function Tab({ icon: Icon, text, wide, divider = true }: { icon: () => React.ReactElement; text: string; wide?: boolean; divider?: boolean }) {
  return (
    <button type="button" className={`${wide ? "w-[88px]" : "w-[86px]"} relative flex h-[66px] flex-none items-center gap-4 pl-4`}>
      <Icon />
      <span className="w-[10px] overflow-hidden whitespace-nowrap text-left text-[22px] leading-8 text-[#5f6368]">{text}</span>
      {divider && <span className="absolute right-0 h-10 w-0.5 bg-[#a3a7ac]" />}
    </button>
  );
}

const Folder = () => (
  <Svg>
    <path d="M1 6Q1 4 3 4H11L14 8H29Q31 8 31 10V26Q31 28 29 28H3Q1 28 1 26Z" fill="#fff" stroke="#4a4a4a" strokeWidth="2" />
    <path d="M2 12H30V27H2Z" fill="#c6c6c6" />
    <path d="M1 11.500H31" stroke="#4a4a4a" strokeWidth="1.6" />
  </Svg>
);
const StarBlue = () => (
  <Svg>
    <path d="M16 2L20 12L31 12.500L22 19L25.500 30L16 23.500L6.500 30L10 19L1 12.500L12 12Z" fill="#2a72e0" />
  </Svg>
);
const Cloud9 = () => (
  <Svg>
    <rect width="32" height="32" fill="#3b7fd6" />
    <path d="M8 25Q1 24 2 19Q3 14 8 14Q9 7 16 7Q23 7 24 14Q30 15 30 20Q29 25 24 25Z" fill="#eef5fd" />
    <circle cx="16" cy="14" r="3" fill="none" stroke="#3b9ac6" strokeWidth="2" />
    <path d="M19 14Q19 19 15 22" stroke="#3b9ac6" strokeWidth="2" fill="none" />
  </Svg>
);

const BOOKMARKS: [() => React.ReactElement, string, boolean?][] = [
  [AppsGrid, "アプリ", true],
  [StarBlue, "Bookmarks"],
  [Cloud9, "Ryuta Orihara"],
  [Globe, "diver_student_client"],
  [Cloud9, ""],
  [Folder, "ruby"],
  [Folder, "vim"],
  [Folder, "Macbook"],
  [Folder, "DB"],
  [Folder, "GitHub"],
  [Folder, "ライフハック", true],
  [Folder, "js"],
  [Folder, "HTML/CSS"],
  [Folder, "git"],
  [Folder, "正規表現", true],
];

/* ---------- window chrome ---------- */

function MenuBar() {
  return (
    <header className="flex h-[46px] items-center justify-between border-b-2 border-[#2b1a22] bg-[linear-gradient(90deg,#f5dfdd_0%,#f2dcdc_25%,#e8dfe6_41%,#f0e2e4_50%,#fde3da_60%,#f5e1e1_72%,#ebdfe6_85%,#dbdfef_100%)] pl-10 pr-11 text-[26px] leading-none text-[#33282c]">
      <nav className="flex items-center gap-9">
        <FaApple className="mr-1 size-[30px]" aria-label="Apple" />
        <span className="text-[28px] font-bold">Chrome</span>
        {["ファイル", "編集", "表示", "履歴", "ブックマーク", "ユーザー", "ウィンドウ", "ヘルプ"].map((m) => (
          <span key={m}>{m}</span>
        ))}
      </nav>
      <div className="flex items-center">
        <Svg className="size-9">
          <circle cx="16" cy="16" r="13" fill="none" stroke="#5c4744" strokeWidth="2.6" />
          <path d="M15 8V17L20 21" fill="none" stroke="#5c4744" strokeWidth="2.2" />
        </Svg>
        <span className="ml-1 w-20 whitespace-nowrap">--:--</span>
        <Svg className="size-9">
          <path d="M2 2H30V30H2Z" fill="none" stroke="#3d2b2c" strokeWidth="3" />
          <path d="M13 8V19Q13 23 10 25M18 7V25M8 12H18M8 17H18M18 17H23V8" fill="none" stroke="#3d2b2c" strokeWidth="2" />
        </Svg>
        <Svg className="ml-4 size-8">
          <path d="M8 12H13L22 4V28L13 20H8Z" fill="#3d2b2c" />
        </Svg>
        <Svg className="ml-8 size-11">
          <g fill="none" stroke="#3d2b2c" strokeWidth="2.400" strokeLinecap="round">
            <path d="M3 12Q16 1 29 12M7.500 17Q16 9 24.500 17M12 21.500Q16 18 20 21.500" />
          </g>
          <circle cx="16" cy="26" r="2" fill="#3d2b2c" />
        </Svg>
        <Svg className="ml-5 size-10">
          <path d="M8 23H2V4H30V23H24" fill="none" stroke="#3d2b2c" strokeWidth="2.200" />
          <path d="M16 16L25 29H7Z" fill="#3d2b2c" />
        </Svg>
        <span className="ml-6 text-2xl leading-none">71%</span>
        <svg viewBox="0 0 48 28" className="ml-2 h-7 w-12" aria-hidden="true">
          <rect x="1.500" y="2" width="38" height="23" rx="4" fill="none" stroke="#33282c" strokeWidth="2.400" />
          <rect x="5" y="5.500" width="21" height="16" fill="#33282c" />
          <path d="M42 9Q46 10 46 13.500Q46 17 42 18Z" fill="#33282c" />
        </svg>
        <span className="ml-7 flex size-8 items-center justify-center rounded-md bg-[#33282e] text-[22px] text-[#eee]">A</span>
        <span className="ml-8">10月7日(日)</span>
        <span className="ml-4 text-[28px]">16:58</span>
        <Svg className="ml-10 size-8">
          <circle cx="12" cy="12" r="9" fill="none" stroke="#2b2733" strokeWidth="2.600" />
          <path d="M19 19L29 29" stroke="#2b2733" strokeWidth="2.800" />
        </Svg>
        <Svg className="ml-7 size-9">
          <path d="M1 5H5M9 5H31M1 13H5M9 13H24M1 20H5M9 20H31M1 28H5M9 28H31" stroke="#2b2733" strokeWidth="3.400" />
        </Svg>
      </div>
    </header>
  );
}

function TabStrip() {
  return (
    <div className="flex h-[84px] items-end bg-[#dee1e6]">
      <div className="flex h-[84px] w-[157px] flex-none items-center gap-4 pl-[26px]">
        <button type="button" aria-label="閉じる" className="size-6 rounded-full border border-[#d8574e] bg-[#ee6a5f]" />
        <button type="button" aria-label="しまう" className="size-6 rounded-full border border-[#d9a13b] bg-[#f5be4f]" />
        <button type="button" aria-label="拡大" className="size-6 rounded-full border border-[#51a73e] bg-[#62c554]" />
      </div>
      <div className="flex flex-none items-end">
        {WIDE_TABS.map(([icon, text], i) => (
          <Tab key={i} icon={icon} text={text} wide />
        ))}
        {TABS.map(([icon, text], i) => (
          <Tab key={i} icon={icon} text={text} divider={i < TABS.length - 1} />
        ))}
        <button type="button" className="flex h-[68px] w-[88px] flex-none items-center gap-4 rounded-t-2xl bg-white pl-4">
          <span className="w-4 overflow-hidden whitespace-nowrap text-[22px] leading-8 text-[#3c4043]">位</span>
          <svg viewBox="0 0 18 18" className="size-[18px]" aria-hidden="true">
            <path d="M2 2L16 16M16 2L2 16" stroke="#4b4f54" strokeWidth="2.400" />
          </svg>
        </button>
        <Tab icon={Gmark} text="ロ" />
      </div>
      <button type="button" aria-label="新しいタブ" className="ml-8 flex h-[66px] items-center">
        <svg viewBox="0 0 24 24" className="size-6" aria-hidden="true">
          <path d="M12 0V24M0 12H24" stroke="#5f6368" strokeWidth="3" />
        </svg>
      </button>
    </div>
  );
}

function Toolbar() {
  return (
    <div className="flex h-[72px] items-center bg-white pl-7 pr-10">
      <button type="button" aria-label="戻る">
        <Svg>
          <path d="M29 16H4M16 4L4 16L16 28" fill="none" stroke="#5a5d61" strokeWidth="2.800" />
        </Svg>
      </button>
      <button type="button" aria-label="進む" className="ml-8">
        <Svg>
          <path d="M3 16H28M16 4L28 16L16 28" fill="none" stroke="#bcbec1" strokeWidth="2.800" />
        </Svg>
      </button>
      <button type="button" aria-label="再読み込み" className="ml-8">
        <Svg>
          <path d="M26 21A12 12 0 1 1 25 9" fill="none" stroke="#5a5d61" strokeWidth="3" />
          <path d="M28 2V14H16Z" fill="#5a5d61" />
        </Svg>
      </button>
      <button type="button" aria-label="ホーム" className="ml-8">
        <Svg>
          <path d="M16 4L29 16H25V28H7V16H3Z" fill="none" stroke="#5a5d61" strokeWidth="2.800" />
        </Svg>
      </button>
      <div className="ml-7 flex h-14 min-w-0 flex-1 items-center rounded-full bg-[#f1f3f5] pl-6 pr-5">
        <Svg>
          <rect x="3" y="12" width="19" height="16" rx="2.500" fill="#5f6368" />
          <path d="M7.500 12V8.500A5 5 0 0 1 17.500 8.500V12" fill="none" stroke="#5f6368" strokeWidth="2.600" />
        </Svg>
        <p className="ml-3 flex-1 whitespace-nowrap text-[27px] leading-10 text-[#80868b]">
          <span className="text-[#5f6368]">https://</span>
          <span className="text-[#202124]">my.au.com</span>/aus/anshin-sp2/pliusArenaWeb/view/plius/lockOperation.xhtml
        </p>
        <button type="button" aria-label="ブックマークに追加">
          <Svg>
            <path d="M16 4L19.500 12.500L29 13L21.500 19L24 28L16 23L8 28L10.500 19L3 13L12.500 12.500Z" fill="none" stroke="#5a5d61" strokeWidth="2.400" />
          </Svg>
        </button>
      </div>
      <button type="button" className="ml-4 flex h-14 items-center gap-4 rounded-full bg-[#e3ecfb] pl-6 pr-2 text-2xl text-[#1b6de0]">
        一時停止中
        <span className="flex size-10 items-center justify-center rounded-full bg-[#475a62] text-xl text-white">O</span>
      </button>
      <button type="button" aria-label="メニュー" className="ml-9 flex flex-col gap-1">
        <span className="size-1.5 rounded-full bg-[#5f6368]" />
        <span className="size-1.5 rounded-full bg-[#5f6368]" />
        <span className="size-1.5 rounded-full bg-[#5f6368]" />
      </button>
    </div>
  );
}

function BookmarkBar() {
  return (
    <nav className="flex h-[65px] items-center gap-8 border-b-2 border-[#b6b6b6] bg-white px-7 pb-2 leading-8 text-[#55585c]">
      {BOOKMARKS.map(([Icon, text, kana], i) => (
        <a key={i} href="#bookmark" aria-label={text || "Cloud9"} className={`${kana ? "text-[22px]" : "text-2xl"} flex flex-none items-center gap-4`}>
          <Icon />
          {text && <span>{text}</span>}
        </a>
      ))}
    </nav>
  );
}

/* ---------- page ---------- */

function CustomerPanel() {
  return (
    <aside className="rounded-lg border-8 border-[#333] bg-white text-[32px]">
      <section className="border-b-[6px] border-[#333]">
        <h2 className="pt-0.5 text-center text-[38px] font-bold leading-[48px]">お客様情報</h2>
        <dl className="grid grid-cols-[148px_1fr] pl-1 pt-1.5 leading-[54px]">
          <dt className="font-bold">電話番号</dt>
          <dd>080-5648-0524</dd>
          <dt className="font-bold">機種名</dt>
          <dd>SCV32</dd>
          <dd className="col-start-2 text-[#4b7ca8]">
            GPS検索：<span className="font-['Noto_Sans_CJK_JP',sans-serif]">○</span>
          </dd>
        </dl>
      </section>
      <h2 className="pt-1 text-center text-[38px] font-bold leading-[48px]">検索結果</h2>
      <div className="px-4 pt-[22px] leading-[55px] text-[#3d3d3d]">
        <p>【検索実行日時】</p>
        <p className="tabular-nums">2018年10月07日 16:57</p>
        <p>【住所】</p>
        <p>神奈川県横浜市磯子区杉田５丁目付近（半径1km）の範囲</p>
      </div>
    </aside>
  );
}

function Phone() {
  return (
    <svg viewBox="0 0 42 86" className="mt-2 h-[86px] w-[42px]" aria-hidden="true">
      <rect x="1" y="0" width="40" height="85" rx="6" fill="#050505" />
      <rect x="3" y="9" width="36" height="67" fill="#f2f2f2" />
      <circle cx="14" cy="5" r="1" fill="#444" />
      <path d="M18 5H25" stroke="#444" strokeWidth="2" />
      <rect x="17" y="79" width="9" height="4" rx="2" fill="#333" />
    </svg>
  );
}

function Notice() {
  return (
    <div className="absolute right-0 top-0 flex h-[420px] w-[672px] flex-col items-center rounded-lg border-8 border-[#f05428] bg-white pt-4 text-[32px] leading-[48px] text-[#f05428]">
      <h3 className="font-bold text-black">お知らせ</h3>
      <p>GPSで更に詳細な位置を検索中</p>
      <p>残り時間　3秒</p>
      <Phone />
      <p className="mb-0.5 mt-auto self-end pr-4 text-[26px] text-black">(c)kingmarron -stock.adobe.com</p>
    </div>
  );
}

function MapControls() {
  return (
    <>
      <div className="absolute left-5 top-5 flex w-14 flex-col items-center rounded bg-white shadow-md">
        <button type="button" aria-label="拡大" className="flex h-[54px] w-full items-center justify-center">
          <svg viewBox="0 0 22 22" className="size-[22px]" aria-hidden="true">
            <path d="M11 0V22M0 11H22" stroke="#666" strokeWidth="6" />
          </svg>
        </button>
        <span className="h-0.5 w-9 bg-[#e6e6e6]" />
        <button type="button" aria-label="縮小" className="flex h-[54px] w-full items-center justify-center">
          <span className="h-1.5 w-[22px] bg-[#666]" />
        </button>
      </div>
      <div className="absolute bottom-0 right-0 flex h-[29px] items-center font-['Roboto','Noto_Sans_CJK_JP',sans-serif] text-[20px] leading-none text-[#444]">
        <span className="flex h-full items-center bg-white/70 pl-2 pr-3">地図データ ©2018 Google, ZENRIN</span>
        <span className="flex h-full items-center gap-2 bg-white/70 pl-3 pr-4">
          500 m
          <span className="mt-1 h-3 w-[132px] border-x-4 border-b-4 border-[#666]" />
        </span>
        <a href="#terms" className="flex h-full items-center bg-white/60 px-[10px]">
          利用規約
        </a>
      </div>
    </>
  );
}

function SearchPanel() {
  return (
    <section className="pb-[3px] pt-0.5">
      <div role="tablist" className="flex">
        {["位置検索", "ロック", "鳴動"].map((t, i) => (
          <button
            key={t}
            type="button"
            role="tab"
            aria-selected={i === 0}
            className={`${i === 0 ? "bg-[#f05428]" : "bg-[#a8a8a8]"} h-[52px] w-56 rounded-t-2xl border-2 border-[#cfcfcf] text-[32px] font-black leading-none text-white`}
          >
            {t}
          </button>
        ))}
      </div>
      <div className="relative rounded-lg border-8 border-[#f05428] bg-white px-[22px] pb-8 pt-[22px]">
        <div className="relative border-2 border-[#d5d5d5]">
          <CityMap />
          <MapControls />
        </div>
        <Notice />
      </div>
    </section>
  );
}

function KddiLogo() {
  return (
    <svg viewBox="0 0 200 92" className="h-[92px] w-[200px]" role="img" aria-label="KDDI Designing The Future">
      <defs>
        <clipPath id="kddi-mark">
          <path d="M10 29H30L26 56L44 29H62L54 91H36L28 66L20 91H0Z" />
          <path
            fillRule="evenodd"
            clipRule="evenodd"
            d="M62 29H92Q118 31 118 54Q115 88 84 91H54ZM80 46L76 74Q94 76 99 58Q100 46 92 46Z"
          />
          <path
            fillRule="evenodd"
            clipRule="evenodd"
            d="M121 29H150Q177 31 176 54Q173 88 142 91H112ZM139 46L135 74Q152 76 157 58Q158 46 150 46Z"
          />
          <path d="M180 29H199L190 91H170Z" />
        </clipPath>
        <radialGradient id="kddi-arc" gradientUnits="userSpaceOnUse" cx="150" cy="205" r="160">
          <stop offset="0.78" stopColor="#17307f" />
          <stop offset="0.92" stopColor="#6fb0e8" />
          <stop offset="0.99" stopColor="#e8f7ff" />
          <stop offset="1" stopColor="#17307f" />
        </radialGradient>
      </defs>
      <text x="12" y="17" fontSize="19" fontStyle="italic" fill="#2b3f86" fontFamily="'Open Sans', sans-serif">
        Designing The Future
      </text>
      <rect x="0" y="28" width="200" height="64" fill="url(#kddi-arc)" clipPath="url(#kddi-mark)" />
    </svg>
  );
}

export default function App() {
  return (
    <div className="flex min-h-screen flex-col overflow-hidden bg-white font-['Inter','Noto_Sans_CJK_JP',sans-serif]">
      <MenuBar />
      <TabStrip />
      <Toolbar />
      <BookmarkBar />
      <main className="mx-auto w-full max-w-[1920px] text-[#333]">
        <div className="flex h-6 items-end overflow-hidden pl-[54px]">
          <h1 className="-mb-1 text-[75px] font-black leading-[75px] text-[#595757]">位置検索サポート</h1>
        </div>
        <div className="mt-[15px] grid grid-cols-[548px_1fr] gap-10">
          <CustomerPanel />
          <SearchPanel />
        </div>
        <div className="mt-[41px] flex justify-center">
          <button type="button" className="h-[88px] w-[680px] border-2 border-[#333] bg-white pl-10 text-[32px] font-bold leading-none text-[#333]">
            au ID ログアウトする
          </button>
        </div>
      </main>
      <footer className="mt-10 flex flex-1 flex-col items-center bg-[#f3f3f3] pt-[61px]">
        <KddiLogo />
        <p className="mt-8 font-['Liberation_Sans',sans-serif] text-[21px] leading-8 text-[#333]">COPYRIGHT KDDI CORPORATION, ALL RIGHTS RESERVED.</p>
      </footer>
      <div className="h-[10px] border-t-2 border-[#555] bg-[#0b0a0d]" />
    </div>
  );
}
